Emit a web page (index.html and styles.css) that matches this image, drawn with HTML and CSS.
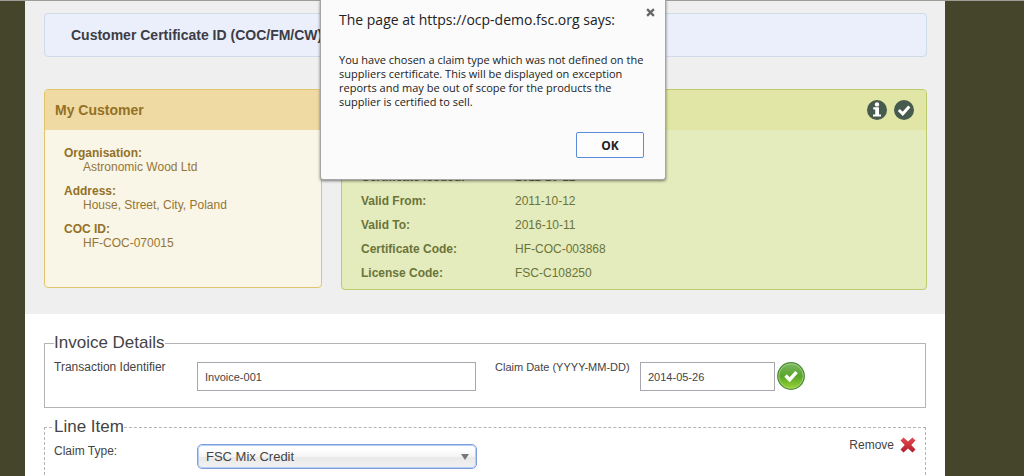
FILE: index.html
```html
<!DOCTYPE html>
<html lang="en">
<head>
<meta charset="utf-8">
<title>Customer claim</title>
<link rel="stylesheet" href="styles.css">
</head>
<body>
<main class="page">
  <section class="overview">
    <h2 class="banner">Customer Certificate ID (COC/FM/CW)</h2>
    <div class="cards">
      <article class="card card-customer">
        <h3 class="card-head">My Customer</h3>
        <dl class="customer">
          <div><dt>Organisation:</dt><dd>Astronomic Wood Ltd</dd></div>
          <div><dt>Address:</dt><dd>House, Street, City, Poland</dd></div>
          <div><dt>COC ID:</dt><dd>HF-COC-070015</dd></div>
        </dl>
      </article>
      <article class="card card-certificate">
        <div class="card-head card-icons">
          <svg width="20" height="20" viewBox="0 0 20 20" aria-hidden="true">
            <circle cx="10" cy="10" r="10" fill="#465a4d"/>
            <circle cx="10" cy="4.400" r="2.200" fill="#fff"/>
            <path d="M6.200 7.300h5.800v7.200h2v2h-8v-2h2.200v-5h-2z" fill="#fff"/>
          </svg>
          <svg width="20" height="20" viewBox="0 0 20 20" aria-hidden="true">
            <circle cx="10" cy="10" r="10" fill="#465a4d"/>
            <path d="M4.800 10l4 3.800 6.500-7.200" fill="none" stroke="#fff" stroke-width="3"/>
          </svg>
        </div>
        <dl class="certificate">
          <dt>Certificate Issued:</dt><dd>2011-10-12</dd>
          <dt>Valid From:</dt><dd>2011-10-12</dd>
          <dt>Valid To:</dt><dd>2016-10-11</dd>
          <dt>Certificate Code:</dt><dd>HF-COC-003868</dd>
          <dt>License Code:</dt><dd>FSC-C108250</dd>
        </dl>
      </article>
    </div>
  </section>
  <form class="details">
    <fieldset class="group">
      <legend>Invoice Details</legend>
      <div class="row">
        <label class="label-main" for="transaction">Transaction Identifier</label>
        <input class="field field-wide" id="transaction" type="text" value="Invoice-001">
        <label class="label-date" for="date">Claim Date (YYYY-MM-DD)</label>
        <input class="field field-date" id="date" type="text" value="2014-05-26">
        <svg class="valid" width="28" height="28" viewBox="0 0 28 28" role="img" aria-label="Valid">
          <defs>
            <linearGradient id="leaf" x1="0" y1="0" x2="0" y2="1">
              <stop offset="0" stop-color="#7fb866"/>
              <stop offset=".5" stop-color="#58a52c"/>
              <stop offset="1" stop-color="#9bd52e"/>
            </linearGradient>
          </defs>
          <circle cx="14" cy="14" r="13.300" fill="url(#leaf)" stroke="#4b8a39" stroke-width="1.200"/>
          <circle cx="14" cy="14" r="12.200" fill="none" stroke="#a9d58d" stroke-width=".8"/>
          <path d="M8.500 13.500l4.200 4.200 6.800-7.600" fill="none" stroke="#fff" stroke-width="3.400"/>
        </svg>
      </div>
    </fieldset>
    <fieldset class="group group-line">
      <legend>Line Item</legend>
      <div class="row">
        <label class="label-main" for="claim">Claim Type:</label>
        <div class="picker">
          <select id="claim"><option>FSC Mix Credit</option></select>
          <svg class="arrow" width="8" height="6" viewBox="0 0 8 6" aria-hidden="true"><path d="M0 0h8l-4 6z" fill="#777"/></svg>
        </div>
        <button class="remove" type="button">Remove
          <svg width="16" height="16" viewBox="0 0 16 16" aria-hidden="true">
            <defs>
              <linearGradient id="red" x1="0" y1="0" x2="0" y2="1">
                <stop offset="0" stop-color="#e44b50"/>
                <stop offset="1" stop-color="#b21e2c"/>
              </linearGradient>
            </defs>
            <path d="M3.500.500L8 4.600 12.500.500 15.500 3.500 11.300 8l4.200 4.500-3 3L8 11.400 3.500 15.500.500 12.500 4.700 8 .500 3.500z" fill="url(#red)"/>
          </svg>
        </button>
      </div>
    </fieldset>
  </form>
</main>
<div class="dialog" role="alertdialog" aria-labelledby="dialog-title" aria-describedby="dialog-text">
  <div class="dialog-top">
    <h1 id="dialog-title">The page at https://ocp-demo.fsc.org says:</h1>
    <button class="close" type="button" aria-label="Close">
      <svg width="9" height="9" viewBox="0 0 8 8" aria-hidden="true"><path d="M1 1l6 6M7 1L1 7" stroke="#666" stroke-width="2"/></svg>
    </button>
  </div>
  <p id="dialog-text">You have chosen a claim type which was not defined on the<br>suppliers certificate. This will be displayed on exception<br>reports and may be out of scope for the products the<br>supplier is certified to sell.</p>
  <button class="ok" type="button">OK</button>
</div>
</body>
</html>
```
FILE: styles.css
```css
* { box-sizing: border-box; }
body {
  margin: 0;
  height: 100vh;
  overflow: hidden;
  border-top: 1px solid #9c9d97;
  background: #45452c;
  color: #444;
  font: 12px/14px "Liberation Sans", Arial, sans-serif;
}
h1, h2, h3, p, dl, dd { margin: 0; }
input, select, button { font-family: inherit; color: inherit; }

.page {
  margin: 0 79px 0 25px;
  min-height: 100vh;
  background: #fff;
}
.overview { padding: 12px 18px 24px 19px; background: #efefef; }
.banner {
  padding: 12px 26px;
  border: 1px solid #cfdaea;
  border-radius: 4px;
  background: #eaeffb;
  color: #3c3c46;
  font-size: 14px;
  line-height: 18px;
}
.cards {
  display: grid;
  grid-template-columns: 278px 1fr;
  gap: 19px;
  align-items: start;
  margin-top: 32px;
}
.card { border: 1px solid; border-radius: 4px; overflow: hidden; }
.card-head { height: 40px; padding: 0 10px; font-size: 14px; line-height: 40px; }
.card-customer { border-color: #e2c46c; background: #faf6e7; color: #957535; }
.card-customer .card-head { background: #eedaa2; color: #937126; }
.card-certificate { border-color: #bccb6c; background: #e4ebbd; color: #6b7439; }
.card-certificate .card-head { background: #e1e6a6; }
.card-icons {
  display: flex;
  align-items: center;
  justify-content: flex-end;
  gap: 7px;
  padding-right: 12px;
}
.customer {
  display: grid;
  gap: 10px;
  padding: 16px 19px 37px;
}
.customer dd { padding-left: 19px; }
dt { font-weight: bold; }
.customer dt { color: #937126; }
.certificate {
  display: grid;
  grid-template-columns: 154px 1fr;
  grid-auto-rows: 24px;
  padding: 35px 19px 4px;
  line-height: 24px;
}

.details { padding: 19px 19px 0; }
.group { margin: 0; padding: 0 9px; border: 1px solid #b4b4b8; }
.group legend { padding: 0; font-size: 17px; line-height: 20px; }
.group-line { margin-top: 9px; border-style: dashed; border-bottom: 0; }
.row { display: flex; align-items: flex-start; padding: 7px 0 16px; }
.label-main { width: 143px; }
.label-date { width: 145px; margin-left: 19px; font-size: 11px; white-space: nowrap; }
.field {
  height: 29px;
  margin: 2px 0 0;
  padding: 0 7px;
  border: 1px solid #a9a6b0;
  background: #fff;
  font-size: 11px;
}
.field-wide { width: 279px; }
.field-date { width: 135px; }
.valid { margin: 2px 0 0 2px; }
.picker { display: grid; align-items: center; width: 280px; }
.picker select, .arrow { grid-area: 1 / 1; }
.picker select {
  appearance: none;
  height: 25px;
  margin: 0;
  padding: 0 8px;
  border: 1px solid #7ca0dd;
  border-radius: 5px;
  outline: 1px solid #b7cdf3;
  outline-offset: -2px;
  background: linear-gradient(#fff 20%, #f4f4f4 50%, #e9e9e9 55%, #f2f2f2);
  font-size: 13px;
}
.arrow { justify-self: end; margin-right: 8px; pointer-events: none; }
.remove {
  display: flex;
  gap: 6px;
  align-items: center;
  margin: -7px 0 0 auto;
  padding: 0;
  border: 0;
  background: none;
  font-size: 12px;
  line-height: 16px;
}

.dialog {
  position: absolute;
  top: 0;
  left: 320px;
  width: 346px;
  padding: 8px 10px 21px 18px;
  border: 1px solid #a6a6a6;
  border-top: 0;
  border-radius: 0 0 3px 3px;
  box-shadow: 0 1px 3px rgba(0, 0, 0, .5);
  background: #fbfbfb;
  color: #222;
  font-family: "Open Sans", "Noto Sans", sans-serif;
}
.dialog-top { display: flex; justify-content: space-between; }
.dialog h1 { font-size: 14px; font-weight: normal; line-height: 24px; }
.close { height: 9px; padding: 0; border: 0; background: none; line-height: 0; }
.dialog p { margin-top: 21px; font-size: 11px; line-height: 14px; white-space: nowrap; }
.ok {
  display: block;
  width: 68px;
  height: 26px;
  margin: 23px 11px 0 auto;
  border: 1px solid #5a8bdc;
  border-radius: 2px;
  background: #fdfdfd;
  font-size: 12px;
  font-weight: bold;
}
```
